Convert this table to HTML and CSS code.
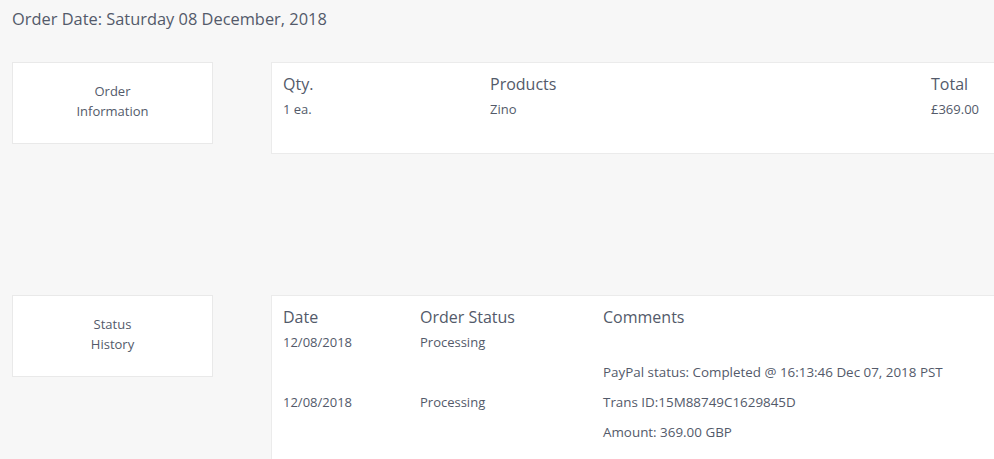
FILE: index.html
```html
<!DOCTYPE html>
<html>
<head>
<meta charset="utf-8">
<link rel="stylesheet" href="styles.css">
</head>
<body>
<div class="page">
  <h1 class="title">Order Date: Saturday 08 December, 2018</h1>

  <section class="section info">
    <div class="label"><span>Order<br>Information</span></div>
    <div class="panel">
      <div class="grid products">
        <div class="th">Qty.</div>
        <div class="th">Products</div>
        <div class="th">Total</div>
        <div class="td">1 ea.</div>
        <div class="td">Zino</div>
        <div class="td">£369.00</div>
      </div>
    </div>
  </section>

  <section class="section history">
    <div class="label"><span>Status<br>History</span></div>
    <div class="panel">
      <div class="grid status">
        <div class="th">Date</div>
        <div class="th">Order Status</div>
        <div class="th">Comments</div>
        <div class="td row">12/08/2018</div>
        <div class="td row">Processing</div>
        <div class="td row"></div>
        <div class="td row">12/08/2018</div>
        <div class="td row">Processing</div>
        <div class="td comments">
          <div>PayPal status: Completed @ 16:13:46 Dec 07, 2018 PST</div>
          <div>Trans ID:15M88749C1629845D</div>
          <div>Amount: 369.00 GBP</div>
        </div>
      </div>
    </div>
  </section>
</div>
</body>
</html>
```

FILE: styles.css
```css
html, body {
  margin: 0;
  padding: 0;
  background: #f7f7f7;
  overflow: hidden;
}
body {
  font-family: "Open Sans", "Noto Sans", "Liberation Sans", sans-serif;
  color: #535a6a;
}
.page {
  width: 1010px;
  padding: 0 0 0 12px;
}
.title {
  margin: 0;
  height: 38px;
  padding-top: 7px;
  box-sizing: border-box;
  font-size: 16.4px;
  font-weight: 400;
  line-height: 24px;
}
.section {
  display: flex;
  align-items: flex-start;
}
.info {
  margin-top: 24px;
}
.history {
  margin-top: 141px;
}
.label {
  width: 201px;
  height: 82px;
  box-sizing: border-box;
  background: #fff;
  border: 1px solid #e9e9e9;
  display: flex;
  align-items: center;
  justify-content: center;
  text-align: center;
  font-size: 13px;
  line-height: 20px;
  padding-bottom: 4px;
}
.panel {
  flex: 1;
  margin-left: 58px;
  background: #fff;
  border: 1px solid #ebebeb;
  border-right: 0;
  padding: 9px 0 0 11px;
}
.info .panel {
  height: 92px;
  box-sizing: border-box;
}
.history .panel {
  height: 200px;
}
.grid {
  display: grid;
  align-items: center;
}
.products {
  grid-template-columns: 207px 441px 1fr;
}
.status {
  grid-template-columns: 137px 183px 1fr;
}
.th {
  font-size: 16px;
  line-height: 24px;
}
.td {
  font-size: 13px;
  line-height: 20px;
}
.products .td {
  padding-top: 3px;
}
.status .th {
  margin-bottom: -2px;
}
.status .row {
  line-height: 30px;
  min-height: 30px;
}
.comments {
  font-size: 13.4px;
}
.comments div {
  line-height: 30px;
}
```
